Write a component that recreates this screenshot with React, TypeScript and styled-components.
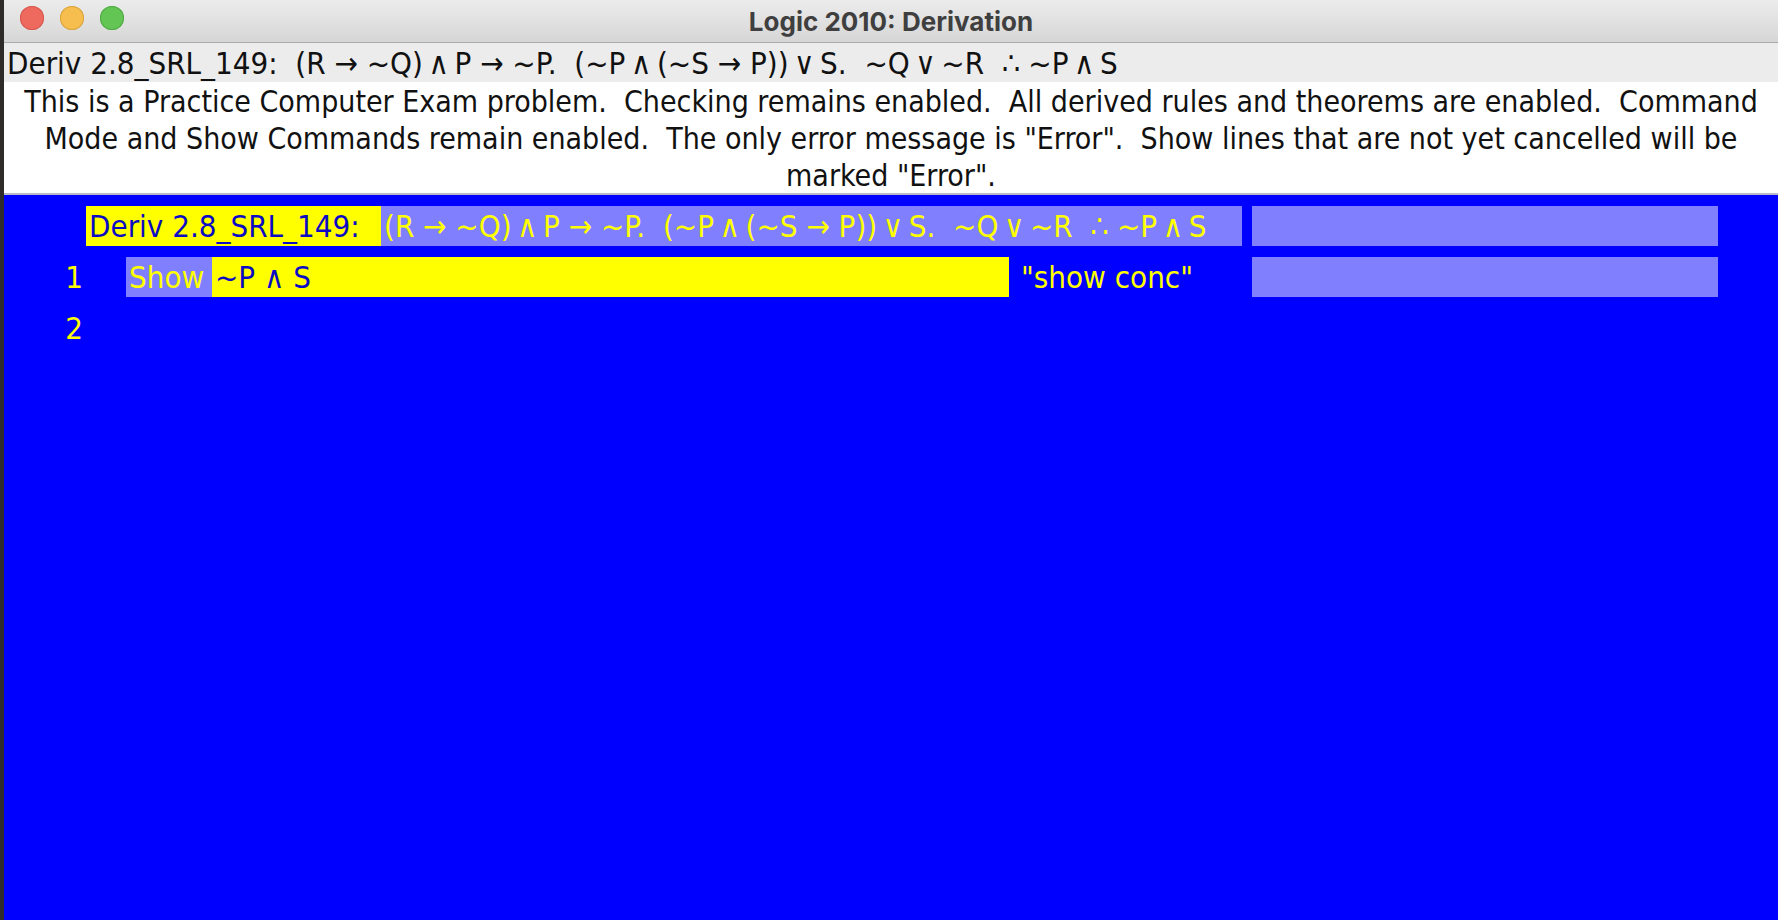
import React from "react";
import styled, { createGlobalStyle } from "styled-components";

const GlobalStyle = createGlobalStyle`
  html, body {
    margin: 0;
    padding: 0;
    height: 100%;
    overflow: hidden;
    background: #3a3a3a;
  }
  #root {
    height: 100%;
  }
`;

const FONT = `"DejaVu Sans Condensed", "DejaVu Sans", "Noto Sans", sans-serif`;

const Desktop = styled.div`
  display: flex;
  height: 100%;
  padding-left: 4px;
  background: #2e2b2a;
  box-sizing: border-box;
`;

const Window = styled.div`
  display: flex;
  flex-direction: column;
  flex: 1;
  min-width: 0;
  background: #0000ff;
`;

const TitleBar = styled.div`
  position: relative;
  display: flex;
  align-items: center;
  justify-content: center;
  height: 42px;
  background: linear-gradient(#ececec, #d6d6d6);
  border-bottom: 1px solid #ababab;
  font-family: "Inter", "Liberation Sans", sans-serif;
  font-weight: 700;
  font-size: 26px;
  color: #3f3f3f;
`;

const Lights = styled.div`
  position: absolute;
  left: 16px;
  top: 6px;
  display: flex;
  gap: 16px;
`;

const Light = styled.span<{ $fill: string; $ring: string }>`
  width: 24px;
  height: 24px;
  border-radius: 50%;
  background: ${(p) => p.$fill};
  box-shadow: inset 0 0 0 1px ${(p) => p.$ring};
`;

const ProblemLine = styled.div`
  height: 39px;
  display: flex;
  align-items: center;
  padding-left: 3px;
  background: #ececec;
  font-family: ${FONT};
  font-stretch: condensed;
  font-size: 31px;
  color: #111;
  white-space: pre;
`;

const Notice = styled.div`
  height: 113px;
  box-sizing: border-box;
  padding-top: 1px;
  background: #ffffff;
  border-bottom: 2px solid #b9b9c6;
  font-family: ${FONT};
  font-stretch: condensed;
  font-size: 30px;
  line-height: 37px;
  color: #111;
  text-align: center;
  white-space: pre-wrap;
`;

const Canvas = styled.div`
  flex: 1;
  display: flex;
  flex-direction: column;
  gap: 11px;
  padding-top: 11px;
  background: #0000ff;
  font-family: ${FONT};
  font-stretch: condensed;
  font-size: 31px;
  white-space: pre;
`;

const Row = styled.div`
  display: flex;
  height: 40px;
`;

const Main = styled.div<{ $indent: number }>`
  display: flex;
  width: 1238px;
  padding-left: ${(p) => p.$indent}px;
  box-sizing: border-box;
`;

const LineNo = styled.div`
  width: 40px;
  margin-right: 32px;
  display: flex;
  align-items: center;
  justify-content: center;
  color: #ffff00;
`;

const Cell = styled.div<{ $bg: string; $fg: string; $width?: number }>`
  display: flex;
  align-items: center;
  padding-left: 3px;
  background: ${(p) => p.$bg};
  color: ${(p) => p.$fg};
  ${(p) => (p.$width ? `width: ${p.$width}px; flex: none;` : "flex: 1;")}
  box-sizing: border-box;
  overflow: hidden;
`;

const Justification = styled.div`
  flex: 1;
  display: flex;
  align-items: center;
  padding-left: 12px;
  color: #ffff00;
`;

const SideBox = styled.div`
  width: 466px;
  margin-left: 10px;
  background: #8080ff;
`;

const YELLOW = "#ffff00";
const LAVENDER = "#8080ff";
const INK = "#0c0cc4";

const formula =
  "(R → ~Q)\u2009∧\u2009P → ~P.  (~P\u2009∧\u2009(~S → P))\u2009∨\u2009S.  ~Q\u2009∨\u2009~R  ∴ ~P\u2009∧\u2009S";

export default function App() {
  return (
    <>
      <GlobalStyle />
      <Desktop>
        <Window>
          <TitleBar>
            <Lights>
              <Light $fill="#ee6a5f" $ring="#d5574c" />
              <Light $fill="#f5be4f" $ring="#d9a23c" />
              <Light $fill="#62c554" $ring="#4ea943" />
            </Lights>
            Logic 2010: Derivation
          </TitleBar>
          <ProblemLine>{"Deriv 2.8_SRL_149:  " + formula}</ProblemLine>
          <Notice>
            {
              'This is a Practice Computer Exam problem.  Checking remains enabled.  All derived rules and theorems are enabled.  Command Mode and Show Commands remain enabled.  The only error message is "Error".  Show lines that are not yet cancelled will be marked "Error".'
            }
          </Notice>
          <Canvas>
            <Row>
              <Main $indent={82}>
                <Cell $bg={YELLOW} $fg={INK} $width={295}>
                  Deriv 2.8_SRL_149:
                </Cell>
                <Cell $bg={LAVENDER} $fg={YELLOW}>
                  {formula}
                </Cell>
              </Main>
              <SideBox />
            </Row>
            <Row>
              <Main $indent={50}>
                <LineNo>1</LineNo>
                <Cell $bg={LAVENDER} $fg={YELLOW} $width={86}>
                  Show
                </Cell>
                <Cell $bg={YELLOW} $fg={INK} $width={797}>
                  ~P ∧ S
                </Cell>
                <Justification>"show conc"</Justification>
              </Main>
              <SideBox />
            </Row>
            <Row>
              <Main $indent={50}>
                <LineNo>2</LineNo>
              </Main>
            </Row>
          </Canvas>
        </Window>
      </Desktop>
    </>
  );
}
